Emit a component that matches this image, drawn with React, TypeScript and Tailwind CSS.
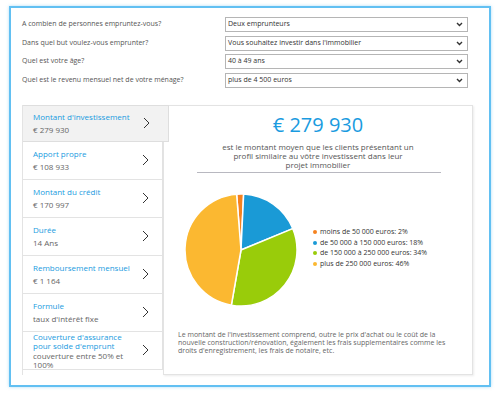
import React from "react";

const questions = [
  { label: "A combien de personnes empruntez-vous?", value: "Deux emprunteurs" },
  { label: "Dans quel but voulez-vous emprunter?", value: "Vous souhaitez investir dans l'immobilier" },
  { label: "Quel est votre âge?", value: "40 à 49 ans" },
  { label: "Quel est le revenu mensuel net de votre ménage?", value: "plus de 4 500 euros" },
];

const items = [
  { title: ["Montant d'investissement"], value: ["€ 279 930"], active: true },
  { title: ["Apport propre"], value: ["€ 108 933"] },
  { title: ["Montant du crédit"], value: ["€ 170 997"] },
  { title: ["Durée"], value: ["14 Ans"] },
  { title: ["Remboursement mensuel"], value: ["€ 1 164"] },
  { title: ["Formule"], value: ["taux d'intérêt fixe"] },
  { title: ["Couverture d'assurance", "pour solde d'emprunt"], value: ["couverture entre 50% et", "100%"] },
];

const slices = [
  { label: "moins de 50 000 euros: 2%", pct: 2, color: "#f5821f" },
  { label: "de 50 000 à 150 000 euros: 18%", pct: 18, color: "#1a9ad6" },
  { label: "de 150 000 à 250 000 euros: 34%", pct: 34, color: "#99cc0a" },
  { label: "plus de 250 000 euros: 46%", pct: 46, color: "#fbb831" },
];

function Pie() {
  const cx = 57, cy = 57, r = 56;
  let a = -4.5;
  const paths = slices.map((s) => {
    const start = a;
    const end = a + (s.pct / 100) * 360;
    a = end;
    const toXY = (deg: number) => {
      const rad = ((deg - 90) * Math.PI) / 180;
      return [cx + r * Math.cos(rad), cy + r * Math.sin(rad)];
    };
    const [x1, y1] = toXY(start);
    const [x2, y2] = toXY(end);
    const large = end - start > 180 ? 1 : 0;
    return { d: `M${cx},${cy} L${x1},${y1} A${r},${r} 0 ${large} 1 ${x2},${y2} Z`, color: s.color };
  });
  return (
    <svg width="114" height="114" viewBox="0 0 114 114">
      {paths.map((p, i) => (
        <path key={i} d={p.d} fill={p.color} stroke="#ffffff" strokeWidth="1.5" strokeLinejoin="round" />
      ))}
    </svg>
  );
}

function Chevron() {
  return (
    <svg width="7" height="12" viewBox="0 0 7 12" className="shrink-0">
      <polyline points="1,1 6,6 1,11" fill="none" stroke="#333" strokeWidth="1" />
    </svg>
  );
}

function SelectChevron() {
  return (
    <svg width="7" height="5" viewBox="0 0 7 5">
      <polyline points="1,1 3.5,3.5 6,1" fill="none" stroke="#333" strokeWidth="1.4" />
    </svg>
  );
}

export default function App() {
  return (
    <div className="w-[500px] h-[395px] bg-white overflow-hidden" style={{ fontFamily: '"Open Sans", "Noto Sans", sans-serif' }}>
      <div className="ml-[9px] mt-[6px] w-[482px] h-[381px] border-2 border-[#62c0f2] shadow-[0_0_3px_rgba(98,192,242,0.5)]">
        <div className="pt-[9px] pl-[11px] pr-[21px] flex flex-col gap-[3.5px]">
          {questions.map((q) => (
            <div key={q.label} className="flex items-center h-[15px]">
              <div className="w-[203px] text-[7px] text-[#555]">{q.label}</div>
              <div className="w-[243px] h-[15px] border border-[#b5b5b5] bg-white flex items-center justify-between pl-[2px] pr-[4px] text-[7px] text-[#333]">
                <span>{q.value}</span>
                <SelectChevron />
              </div>
            </div>
          ))}
        </div>

        <div className="mt-[17px] ml-[11px] flex">
          <div className="w-[141px] flex flex-col border-l border-[#e3e3e3]">
            {items.map((it, i) => (
              <div
                key={i}
                className={
                  it.active
                    ? "relative z-10 w-[146px] h-[37px] bg-[#f2f2f2] border border-l-0 border-[#dedede] flex items-center justify-between pl-[10px] pr-[18px]"
                    : "h-[38px] bg-white border-b border-r border-[#e3e3e3] flex items-center justify-between pl-[10px] pr-[13px]"
                }
              >
                <div className="flex flex-col">
                  <div className="text-[8px] text-[#1a9be0] leading-[9px]">
                    {it.title.map((t, j) => (
                      <div key={j}>{t}</div>
                    ))}
                  </div>
                  <div className={`text-[8px] text-[#666] leading-[9px] ${it.title.length > 1 ? "mt-[1px]" : "mt-[3.5px]"}`}>
                    {it.value.map((t, j) => (
                      <div key={j}>{t}</div>
                    ))}
                  </div>
                </div>
                <Chevron />
              </div>
            ))}
          </div>

          <div className="w-[310px] h-[270px] border border-[#e3e3e3] shadow-[1px_1px_2px_rgba(0,0,0,0.08)] bg-white flex flex-col">
            <div className="flex flex-col items-center pt-[6px]">
              <div className="text-[20px] leading-[26px] text-[#1a9be0]">€ 279 930</div>
              <div className="mt-[4px] text-[8px] leading-[9px] text-[#555] text-center">
                est le montant moyen que les clients présentant un
                <br />
                profil similaire au vôtre investissent dans leur
                <br />
                projet immobilier
              </div>
              <div className="mt-[3px] ml-[2px] w-[244px] h-[1.5px] bg-[#b8b8c0]" />
            </div>
            <div className="mt-[20px] flex items-center">
              <div className="ml-[20px]">
                <Pie />
              </div>
              <div className="ml-[15px] flex flex-col gap-[2.5px] mt-[-4px]">
                {slices.map((s) => (
                  <div key={s.label} className="flex items-center text-[7px] leading-[8px] text-[#333]">
                    <span className="w-[4px] h-[4px] rounded-full mr-[3px]" style={{ backgroundColor: s.color }} />
                    <span>{s.label}</span>
                  </div>
                ))}
              </div>
            </div>
            <div className="mt-[24px] pl-[14px] text-[7px] leading-[8px] text-[#666]">
              Le montant de l'investissement comprend, outre le prix d'achat ou le coût de la
              <br />
              nouvelle construction/rénovation, également les frais supplementaires comme les
              <br />
              droits d'enregistrement, les frais de notaire, etc.
            </div>
          </div>
        </div>
      </div>
    </div>
  );
}
